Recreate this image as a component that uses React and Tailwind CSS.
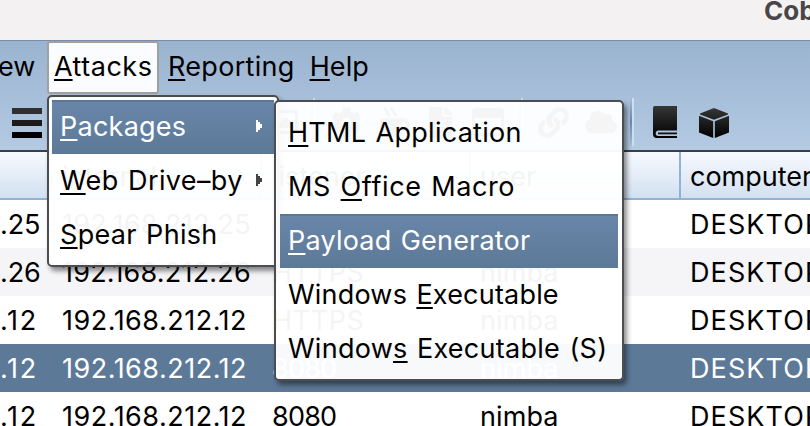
import React from "react";
import { FaCog, FaMugHot, FaFileAlt, FaLink, FaCloud, FaRegWindowMaximize, FaRegImage } from "react-icons/fa";

function Label({ pre = "", k, post = "", className = "" }) {
  return (
    <span className={`whitespace-pre ${className}`}>
      {pre}
      <span className="underline decoration-2 underline-offset-[3px] [text-decoration-skip-ink:none]">{k}</span>
      {post}
    </span>
  );
}

function Separator() {
  return (
    <div className="flex h-[48px] w-[4px] shrink-0">
      <div className="w-[2px] bg-linear-to-b from-[#a5bdd7] via-[#6a8caf] to-[#a9c1db]" />
      <div className="w-[2px] bg-[#cfdeee]" />
    </div>
  );
}

function Book() {
  return (
    <svg viewBox="0 0 24 32" className="h-[32px] w-[24px] shrink-0">
      <defs>
        <linearGradient id="bk" x1="0" y1="0" x2="0" y2="1">
          <stop offset="0" stopColor="#363636" />
          <stop offset="1" stopColor="#000" />
        </linearGradient>
      </defs>
      <path fill="url(#bk)" d="M2 0H24V24.5H5Q2.600 25 2.600 27.500Q2.600 29.800 5 30H24V32H3Q0 31.500 0 28V2Q0 0 2 0Z" />
      <path fill="#111" d="M5 26.500H24V28.300H5Z" />
    </svg>
  );
}

function Cube() {
  return (
    <svg viewBox="0 0 30 30" className="h-[30px] w-[30px] shrink-0">
      <defs>
        <linearGradient id="cb" x1="0" y1="0" x2="0" y2="30" gradientUnits="userSpaceOnUse">
          <stop offset="0" stopColor="#363636" />
          <stop offset="1" stopColor="#000" />
        </linearGradient>
      </defs>
      <path fill="url(#cb)" d="M15 0L29 5.500V6.600L15 11.800L1 6.600V5.500ZM0 7.800L14.200 13.200V30L0 24.500ZM30 7.800L15.800 13.200V30L30 24.500Z" />
    </svg>
  );
}

function Toolbar() {
  return (
    <div className="flex h-[58px] items-center pb-[2px] pl-[12px] text-[#1c1c1c]">
      <div className="flex w-[30px] shrink-0 flex-col gap-[6px] pt-[2px]">
        <div className="h-[6px] bg-[#303030]" />
        <div className="h-[6px] bg-[#1b1b1b]" />
        <div className="h-[6px] bg-black" />
      </div>
      <FaRegImage className="ml-[224px] shrink-0" size={32} />
      <div className="ml-[13px]"><Separator /></div>
      <FaCog className="ml-[16px] shrink-0" size={31} />
      <FaMugHot className="ml-[18px] shrink-0" size={30} />
      <FaFileAlt className="ml-[15px] shrink-0" size={31} />
      <FaRegWindowMaximize className="ml-[16px] shrink-0" size={32} />
      <div className="ml-[15px]"><Separator /></div>
      <FaLink className="ml-[15px] shrink-0" size={31} />
      <FaCloud className="ml-[16px] shrink-0" size={32} />
      <div className="ml-[13px]"><Separator /></div>
      <div className="ml-[19px]"><Book /></div>
      <div className="ml-[22px] pt-[1px]"><Cube /></div>
    </div>
  );
}

const ROWS = [
  { ext: ".25", int: "192.168.212.25", lis: "HTTPS", cls: "bg-white", et: "tracking-[-0.1px]", it: "tracking-[0.22px]", lt: "tracking-[0.6px]" },
  { ext: ".26", int: "192.168.212.26", lis: "HTTPS", cls: "bg-[#f5f5f8]", et: "tracking-[-0.1px]", it: "tracking-[0.2px]", lt: "tracking-[0.6px]" },
  { ext: ".12", int: "192.168.212.12", lis: "HTTPS", cls: "bg-white", et: "tracking-[1.6px]", it: "tracking-[0.5px]", lt: "tracking-[0.6px]" },
  { ext: ".12", int: "192.168.212.12", lis: "8080", cls: "bg-[#5d7998] text-white", et: "tracking-[1.6px]", it: "tracking-[0.5px]", lt: "tracking-[-0.8px]" },
  { ext: ".12", int: "192.168.212.12", lis: "8080", cls: "bg-white", et: "tracking-[1.6px]", it: "tracking-[0.5px]", lt: "tracking-[-0.8px]" },
];

function Row({ r }) {
  return (
    <div className={`flex h-[48px] shrink-0 items-center whitespace-nowrap ${r.cls}`}>
      <span className={`w-[62px] shrink-0 ${r.et}`}>{r.ext}</span>
      <span className={`w-[210px] shrink-0 ${r.it}`}>{r.int}</span>
      <span className={`w-[208px] shrink-0 ${r.lt}`}>{r.lis}</span>
      <span className="w-[210px] shrink-0 tracking-[0.1px]">nimba</span>
      <span className="shrink-0 tracking-[1.1px]">DESKTOP-</span>
    </div>
  );
}

function Item({ active, sub, children }) {
  return (
    <div
      className={`flex h-[54px] items-center pl-[8px] pr-[12px] ${
        active ? "border-t-2 border-[#5b7795] bg-linear-to-b from-[#6886a8] to-[#5d7998] pb-[4px] text-white" : "pb-[2px]"
      }`}
    >
      {children}
      {sub && (
        <svg viewBox="0 0 6 12" className="ml-auto h-[12px] w-[6px]">
          <path d="M0 0H2V2H4V4H6V8H4V10H2V12H0Z" fill={active ? "#fff" : "#444"} />
        </svg>
      )}
    </div>
  );
}

export default function App() {
  return (
    <div className="relative flex h-[426px] w-[810px] flex-col overflow-hidden bg-white font-['Inter','Liberation_Sans',sans-serif] text-[27px] font-[370] leading-none text-black">
      <div className="flex h-[40px] shrink-0 bg-[#f4f1f3] pl-[764px] text-[26px] font-bold text-[#484648]">
        <span className="-mt-[2px] whitespace-nowrap">Cobalt Strike</span>
      </div>
      <div className="h-[112px] shrink-0 border-t border-b-2 border-t-[#7590ae] border-b-[#3c4046] bg-linear-to-b from-[#9ab3cf] to-[#b4cae3]">
        <div className="flex h-[53px] items-center">
          <span className="-ml-[2px] w-[49px] shrink-0 pb-[2px]">ew</span>
          <div className="flex h-[53px] w-[112px] items-center rounded-[3px] border-2 border-[#a0a0a0] bg-[#fbfcff] pb-[2px] pl-[5px]">
            <Label k="A" post="ttacks" className="tracking-[0.5px]" />
          </div>
          <Label k="R" post="eporting" className="ml-[9px] pb-[2px] tracking-[0.3px]" />
          <Label k="H" post="elp" className="ml-[15px] pb-[2px] tracking-[0.1px]" />
        </div>
        <Toolbar />
      </div>
      <div className="flex h-[48px] shrink-0 items-center border-b-2 border-[#91b2d6] bg-linear-to-b from-[#f7faff] to-[#d2e0f0]">
        <div className="h-full w-[52px] shrink-0 border-r-2 border-[#91b2d6]" />
        <div className="flex h-full w-[210px] shrink-0 items-center border-r-2 border-[#91b2d6] pl-[10px] pt-[3px]">internal</div>
        <div className="flex h-full w-[209px] shrink-0 items-center border-r-2 border-[#91b2d6] pl-[10px] pt-[3px]">listener</div>
        <div className="flex h-full w-[210px] shrink-0 items-center border-r-2 border-[#91b2d6] pl-[9px] pt-[3px]">user</div>
        <div className="pl-[9px] pt-[3px]">computer</div>
      </div>
      {ROWS.map((r, i) => <Row key={i} r={r} />)}

      <div className="absolute left-[47px] top-[95px] h-[172px] w-[232px] rounded-[5px] border-2 border-[#4b4d50] bg-white/[0.955] p-[3px] tracking-[0.25px] shadow-[3px_4px_5px_rgba(0,0,0,0.45)] [word-spacing:1.5px]">
        <Item active sub><Label k="P" post="ackages" /></Item>
        <Item sub><Label k="W" post="eb Drive–by" className="tracking-[0.37px]" /></Item>
        <Item><Label k="S" post="pear Phish" className="tracking-[0.3px]" /></Item>
      </div>
      <div className="absolute left-[274px] top-[100px] h-[281px] w-[350px] rounded-[5px] border-2 border-[#4b4d50] bg-white/[0.955] p-[4px] tracking-[0.27px] shadow-[3px_4px_5px_rgba(0,0,0,0.45)] [word-spacing:1.5px]">
        <Item><Label k="H" post="TML Application" /></Item>
        <Item><Label pre="MS " k="O" post="ffice Macro" className="tracking-[0.6px]" /></Item>
        <Item active><Label k="P" post="ayload Generator" className="tracking-[0.2px]" /></Item>
        <Item><Label pre="Windows " k="E" post="xecutable" className="tracking-[0.2px]" /></Item>
        <Item><Label pre="Window" k="s" post=" Executable (S)" /></Item>
      </div>
    </div>
  );
}
